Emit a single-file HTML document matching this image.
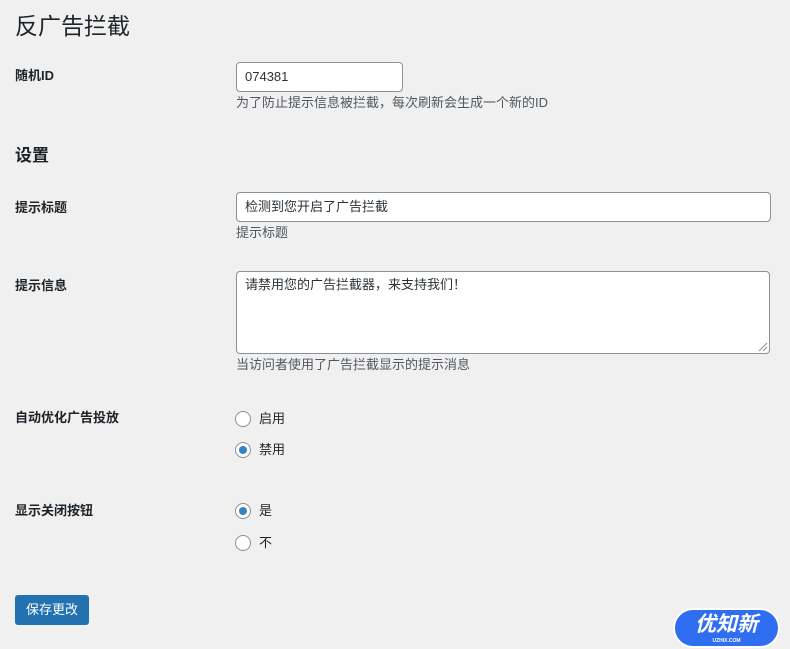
<!DOCTYPE html>
<html><head><meta charset="utf-8"><style>
*{box-sizing:border-box;margin:0;padding:0}
body{width:790px;height:649px;background:#f0f0f1;font-family:"Liberation Sans","Noto Sans CJK SC",sans-serif;color:#1d2327;font-size:13px;position:relative;overflow:hidden}
.a{position:absolute;white-space:nowrap;line-height:18px}
.lbl{font-weight:bold;font-size:13px}
.inp{position:absolute;background:#fff;border:1px solid #8c8f94;border-radius:4px;padding:0 8px;font-size:13px;color:#2c3338}
.desc{font-size:13px;color:#50575e}
.r{position:absolute;width:16px;height:16px;border:1px solid #8c8f94;border-radius:50%;background:#fff}
.r.on::after{content:"";position:absolute;left:3px;top:3px;width:8px;height:8px;border-radius:50%;background:#3582c4}
</style></head><body>
<div class="a" style="left:15px;top:12px;font-size:23px;line-height:28px">反广告拦截</div>
<div class="a lbl" style="left:15px;top:67px">随机ID</div>
<div class="inp" style="left:236px;top:62px;width:167px;height:30px;line-height:28px">074381</div>
<div class="a desc" style="left:236px;top:94px">为了防止提示信息被拦截，每次刷新会生成一个新的ID</div>
<div class="a" style="left:15px;top:145px;font-size:17px;font-weight:bold;line-height:22px">设置</div>
<div class="a lbl" style="left:15px;top:199px">提示标题</div>
<div class="inp" style="left:236px;top:192px;width:535px;height:30px;line-height:28px">检测到您开启了广告拦截</div>
<div class="a desc" style="left:236px;top:224px">提示标题</div>
<div class="a lbl" style="left:15px;top:277px">提示信息</div>
<div class="inp" style="left:236px;top:271px;width:534px;height:83px;padding-top:4px;line-height:18px">请禁用您的广告拦截器，来支持我们！
<svg style="position:absolute;right:1px;bottom:1px" width="12" height="12"><path d="M11 3L3 11M11 7L7 11" stroke="#8c8f94" stroke-width="1"/></svg></div>
<div class="a desc" style="left:236px;top:356px">当访问者使用了广告拦截显示的提示消息</div>
<div class="a lbl" style="left:15px;top:409px">自动优化广告投放</div>
<div class="r" style="left:235px;top:411px"></div><div class="a" style="left:259px;top:410px">启用</div>
<div class="r on" style="left:235px;top:442px"></div><div class="a" style="left:259px;top:441px">禁用</div>
<div class="a lbl" style="left:15px;top:502px">显示关闭按钮</div>
<div class="r on" style="left:235px;top:503px"></div><div class="a" style="left:259px;top:502px">是</div>
<div class="r" style="left:235px;top:535px"></div><div class="a" style="left:259px;top:534px">不</div>
<div class="a" style="left:15px;top:595px;width:74px;height:30px;background:#2271b1;border:1px solid #2271b1;border-radius:3px;color:#fff;line-height:28px;text-align:center">保存更改</div>
<div class="a" style="left:673px;top:608px;width:107px;height:40px;border-radius:20px;background:#2f6ef0;border:2px solid #fff;color:#fff;text-align:center;font-weight:bold;font-style:italic;font-size:21px;line-height:28px;padding-top:1px">优知新<div style="font-size:5px;line-height:5px;font-style:normal">UZHIX.COM</div></div>
</body></html>
